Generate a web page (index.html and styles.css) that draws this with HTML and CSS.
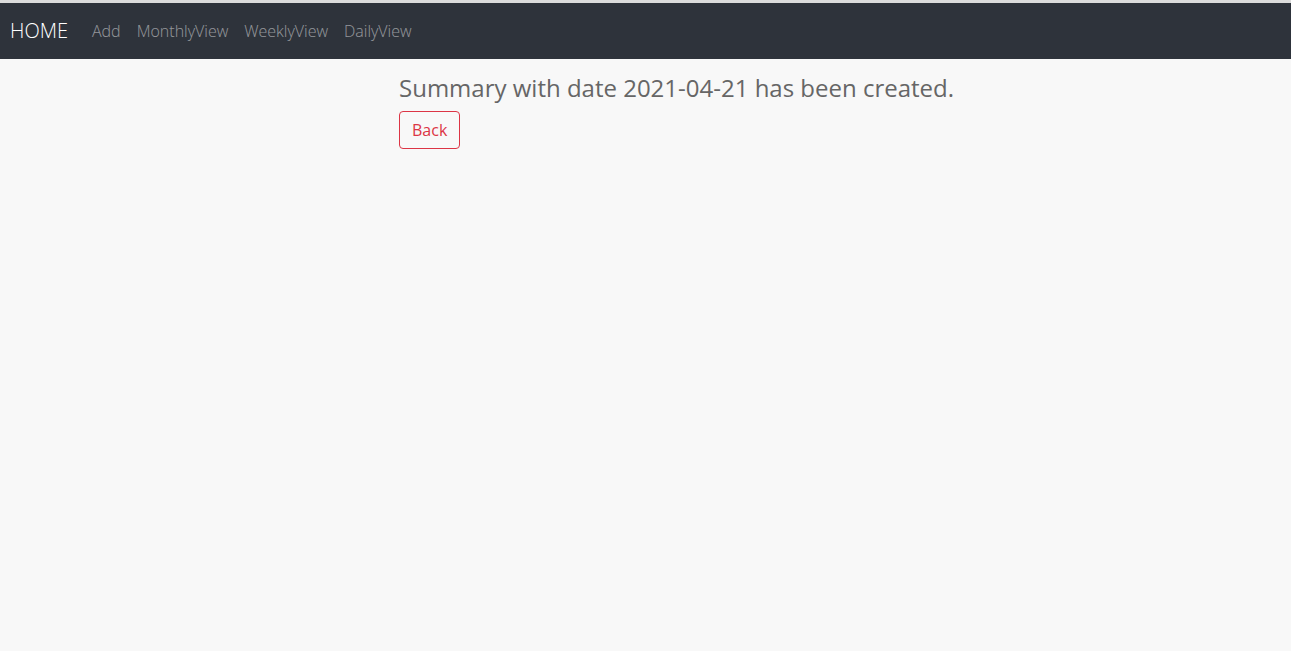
FILE: index.html
```html
<!DOCTYPE html>
<html lang="en">
<head>
<meta charset="utf-8">
<title>Summary created</title>
<link rel="stylesheet" href="styles.css">
</head>
<body>
<div class="topline"></div>
<nav class="navbar">
  <a class="brand" href="#">HOME</a>
  <ul class="nav-links">
    <li><a href="#">Add</a></li>
    <li><a href="#">MonthlyView</a></li>
    <li><a href="#">WeeklyView</a></li>
    <li><a href="#">DailyView</a></li>
  </ul>
</nav>
<main class="content">
  <h4 class="message">Summary with date 2021-04-21 has been created.</h4>
  <a class="btn-outline-danger" href="#">Back</a>
</main>
</body>
</html>
```

FILE: styles.css
```css
html, body {
  margin: 0;
  padding: 0;
  height: 100%;
}
body {
  background: #f8f8f8;
  font-family: "Open Sans", "Noto Sans", sans-serif;
  font-size: 16px;
  line-height: 1.5;
  color: #212529;
}
.topline {
  height: 3px;
  background: #dcdcdc;
}
.navbar {
  display: flex;
  align-items: center;
  background: #2e333b;
  padding: 8px 10px;
  font-weight: 300;
}
.brand {
  color: #ffffff;
  font-size: 20px;
  line-height: 30px;
  padding: 5px 0;
  margin-right: 16px;
  text-decoration: none;
}
.nav-links {
  display: flex;
  list-style: none;
  margin: 0;
  padding: 0;
}
.nav-links a {
  display: block;
  padding: 8px;
  color: rgba(255, 255, 255, 0.5);
  text-decoration: none;
  line-height: 24px;
}
.content {
  padding: 15px 0 0 399px;
}
.message {
  margin: 0 0 8px;
  font-size: 24px;
  font-weight: 400;
  line-height: 1.2;
  color: #666666;
}
.btn-outline-danger {
  display: inline-block;
  padding: 6px 12px;
  border: 1px solid #dc3545;
  border-radius: 4px;
  color: #dc3545;
  text-decoration: none;
  line-height: 24px;
}
```
